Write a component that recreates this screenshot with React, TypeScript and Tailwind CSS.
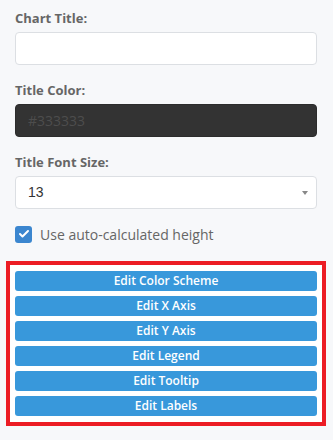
import { Check } from 'lucide-react';

const font = { fontFamily: '"Open Sans", "Noto Sans", sans-serif' };

const editButtons = [
  'Edit Color Scheme',
  'Edit X Axis',
  'Edit Y Axis',
  'Edit Legend',
  'Edit Tooltip',
  'Edit Labels',
];

function FieldLabel({ children }: { children: string }) {
  return (
    <label className="block h-[20px] leading-[20px] text-[13px] font-bold text-[#666] mb-[4px]">
      {children}
    </label>
  );
}

export default function App() {
  return (
    <div className="min-h-[440px] w-[333px] bg-[#f7f8fa] pt-[8px]" style={font}>
      <div className="pl-[15px] pr-[16px]">
        <div className="mb-[15px]">
          <FieldLabel>Chart Title:</FieldLabel>
          <input
            type="text"
            className="block w-full h-[33px] rounded-[4px] border border-[#dcdfe3] bg-white px-[12px] text-[14px] text-[#333] outline-none"
          />
        </div>

        <div className="mb-[15px]">
          <FieldLabel>Title Color:</FieldLabel>
          <input
            type="text"
            placeholder="#333333"
            className="block w-full h-[33px] rounded-[4px] border border-[#2c2c2c] bg-[#333333] px-[12px] text-[14px] text-white placeholder:text-[#4d4d4d] outline-none"
          />
        </div>

        <div className="mb-[15px]">
          <FieldLabel>Title Font Size:</FieldLabel>
          <div className="relative h-[33px] rounded-[4px] border border-[#dcdfe3] bg-white flex items-center pl-[12px]">
            <span className="text-[14px] text-[#333]" style={{ fontFamily: '"Liberation Sans", Arial, sans-serif' }}>
              13
            </span>
            <svg className="absolute right-[8px] top-[14px]" width="6" height="4" viewBox="0 0 6 4">
              <path d="M0 0 L6 0 L3 4 Z" fill="#888" />
            </svg>
          </div>
        </div>

        <div className="flex items-center h-[20px] gap-[8px]">
          <span className="w-[17px] h-[17px] rounded-[3px] bg-[#3b86cf] flex items-center justify-center">
            <Check className="w-[12px] h-[12px] text-white" strokeWidth={4} />
          </span>
          <span className="text-[14px] text-[#666]">Use auto-calculated height</span>
        </div>
      </div>

      <div className="ml-[6px] mt-[17px] w-[320px] border-4 border-[#ec1c24] bg-white pt-[6px] px-[5px] pb-[6px] flex flex-col gap-[5px]">
        {editButtons.map((label) => (
          <button
            key={label}
            className="h-[20px] w-full rounded-[3px] bg-[#3898db] text-white text-[12px] font-semibold leading-[20px]"
          >
            {label}
          </button>
        ))}
      </div>
    </div>
  );
}
